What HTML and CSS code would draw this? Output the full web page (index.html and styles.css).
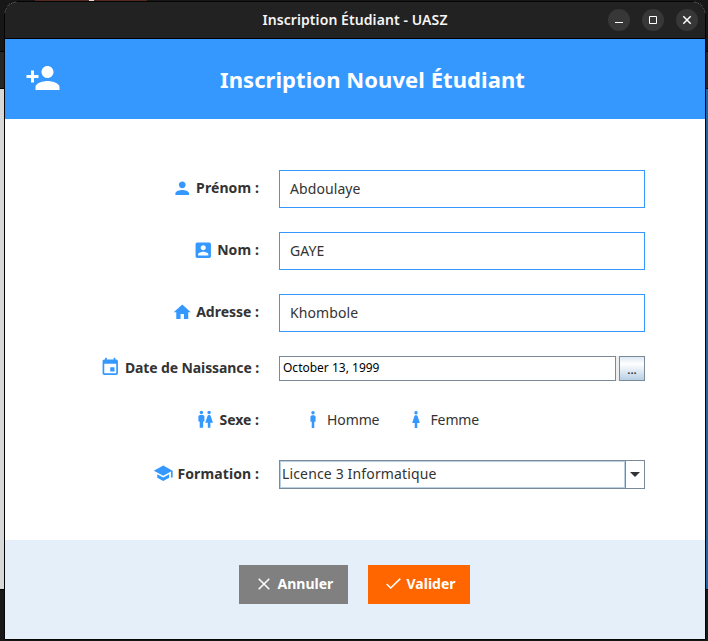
FILE: index.html
```
<!DOCTYPE html>
<html lang="fr">
<head>
<meta charset="utf-8">
<title>Inscription Étudiant - UASZ</title>
<link rel="stylesheet" href="styles.css">
</head>
<body>
<main class="window">
  <div class="titlebar">
    <div class="window-title">Inscription Étudiant - UASZ</div>
    <div class="controls">
      <span class="control"><svg viewBox="0 0 22 22"><path d="M7 13.5h8" /></svg></span>
      <span class="control"><svg viewBox="0 0 22 22"><path d="M7.5 7.5h7v7h-7z" /></svg></span>
      <span class="control"><svg viewBox="0 0 22 22"><path d="M7.3 7.3l7.4 7.4M14.7 7.3l-7.4 7.4" stroke-width="1.5" /></svg></span>
    </div>
  </div>
  <header class="header">
    <svg class="header-icon" viewBox="0 0 24 24"><path d="M15 12c2.21 0 4-1.79 4-4s-1.79-4-4-4-4 1.79-4 4 1.79 4 4 4zm-9-2V7H4v3H1v2h3v3h2v-3h3v-2H6zm9 4c-2.67 0-8 1.34-8 4v2h16v-2c0-2.66-5.33-4-8-4z"/></svg>
    <h1>Inscription Nouvel Étudiant</h1>
  </header>
  <form class="form">
    <div class="label label-loose"><svg class="icon" viewBox="0 0 24 24"><path d="M12 12c2.21 0 4-1.79 4-4s-1.79-4-4-4-4 1.79-4 4 1.79 4 4 4zm0 2c-2.67 0-8 1.34-8 4v2h16v-2c0-2.66-5.33-4-8-4z"/></svg><span>Prénom :</span></div>
    <div class="field">Abdoulaye</div>

    <div class="label label-loose"><svg class="icon" viewBox="0 0 24 24"><path d="M3 5v14c0 1.1.89 2 2 2h14c1.1 0 2-.9 2-2V5c0-1.1-.9-2-2-2H5c-1.11 0-2 .9-2 2zm12 4c0 1.66-1.34 3-3 3s-3-1.34-3-3 1.34-3 3-3 3 1.34 3 3zm-9 8c0-2 4-3.1 6-3.1s6 1.1 6 3.1v1H6v-1z"/></svg><span>Nom :</span></div>
    <div class="field">GAYE</div>

    <div class="label"><svg class="icon" viewBox="0 0 24 24"><path d="M10 20v-6h4v6h5v-8h3L12 3 2 12h3v8z"/></svg><span>Adresse :</span></div>
    <div class="field">Khombole</div>

    <div class="label label-tight"><svg class="icon" viewBox="0 0 24 24"><path d="M17 12h-5v5h5v-5zM16 1v2H8V1H6v2H5c-1.11 0-1.99.9-1.99 2L3 19c0 1.1.89 2 2 2h14c1.1 0 2-.9 2-2V5c0-1.1-.9-2-2-2h-1V1h-2zm3 18H5V8h14v11z"/></svg><span>Date de Naissance :</span></div>
    <div class="date">
      <div class="date-value">October 13, 1999</div>
      <div class="date-button">...</div>
    </div>

    <div class="label"><svg class="icon" viewBox="0 0 24 24"><path d="M5.500 22v-7.500H4V9c0-1.100.9-2 2-2h3c1.100 0 2 .9 2 2v5.500H9.500V22h-4zM18 22v-6h3l-2.540-7.630C18.180 7.550 17.420 7 16.560 7h-.12c-.86 0-1.630.55-1.900 1.370L12 16h3v6h3zM7.500 6c1.110 0 2-.89 2-2s-.89-2-2-2-2 .89-2 2 .89 2 2 2zm9 0c1.110 0 2-.89 2-2s-.89-2-2-2-2 .89-2 2 .89 2 2 2z"/></svg><span>Sexe :</span></div>
    <div class="options">
      <div class="option"><svg class="person" viewBox="0 0 8 20"><path d="M2.500 20v-7.500H1V7c0-1.100.9-2 2-2h2c1.100 0 2 .9 2 2v5.500H5.500V20z"/><circle cx="4" cy="2" r="2"/></svg><span>Homme</span></div>
      <div class="option"><svg class="person" viewBox="0 0 9 20"><path d="M6 20v-6h3L6.500 6.370C6.200 5.550 5.500 5 4.560 5h-.12C3.500 5 2.800 5.550 2.500 6.370L0 14h3v6z"/><circle cx="4.500" cy="2" r="2"/></svg><span>Femme</span></div>
    </div>

    <div class="label label-loose"><svg class="icon" viewBox="0 0 24 24"><path d="M5 13.180v4L12 21l7-3.820v-4L12 17l-7-3.820zM12 3L1 9l11 6 9-4.910V17h2V9L12 3z"/></svg><span>Formation :</span></div>
    <div class="select">
      <div class="select-value">Licence 3 Informatique</div>
      <div class="select-arrow"><svg viewBox="0 0 10 5"><path d="M0 0h10L5 5z"/></svg></div>
    </div>
  </form>
  <footer class="footer">
    <div class="button cancel"><svg viewBox="0 0 12 12"><path d="M.7.7l10.600 10.600M11.300.7L.7 11.300"/></svg><span>Annuler</span></div>
    <div class="button submit"><svg class="check" viewBox="0 0 15 11"><path d="M.7 6l4 4L14.300.6"/></svg><span>Valider</span></div>
  </footer>
</main>
</body>
</html>
```
FILE: styles.css
```
* { box-sizing: border-box; }

body {
  margin: 0;
  height: 641px;
  overflow: hidden;
  padding: 1px 2px 1px 4px;
  font: 14px/20px "Noto Sans", sans-serif;
  color: #333;
  /* Desktop visible around the window */
  background:
    linear-gradient(#ddd, #ddd) 89px 0 / 5px 1px no-repeat,
    linear-gradient(#552a20, #552a20) 35px 0 / 112px 1px no-repeat,
    linear-gradient(#171717 0 51px, #000 51px 52px, #262626 52px 88px, #000 88px 89px, #d6d8da 89px 589px, #000 589px 590px, #181818 590px) 0 0 / 4px 641px no-repeat,
    linear-gradient(#171717 0 51px, #000 51px 52px, #262626 52px 88px, #000 88px 89px, #1b669c 89px 589px, #000 589px 590px, #141a18 590px) 100% 0 / 3px 641px no-repeat,
    #171717;
}

.window {
  width: 702px;
  height: 639px;
  border: 1px solid #050505;
  border-radius: 13px 13px 0 0;
  overflow: hidden;
  background: #fff;
}

.titlebar {
  display: grid;
  grid-template-columns: 1fr;
  align-items: center;
  height: 37px;
  background: #222;
  border-bottom: 1px solid #000;
}

.window-title, .controls { grid-area: 1 / 1; }

.window-title {
  text-align: center;
  font-size: 14px;
  font-weight: 600;
  letter-spacing: 0.08px;
  color: #f5f5f5;
}

.controls {
  display: flex;
  justify-content: flex-end;
  gap: 12px;
  padding-right: 7px;
}

.control {
  width: 22px;
  height: 22px;
  border-radius: 50%;
  background: #373737;
}

.control svg { display: block; fill: none; stroke: #fff; }

.header {
  display: flex;
  align-items: center;
  height: 80px;
  padding: 0 20px;
  background: #3498ff;
  color: #fff;
}

.header-icon { width: 36px; height: 36px; margin-top: -3px; fill: #fff; }

h1 {
  flex: 1;
  margin: 0;
  padding-right: 1px;
  text-align: center;
  font-size: 22px;
  line-height: 30px;
  letter-spacing: 0.07px;
}

.form {
  display: grid;
  grid-template-columns: 254px 366px;
  grid-template-rows: 38px 38px 38px 25px 31px 29px;
  gap: 24px 20px;
  height: 421px;
  padding-top: 51px;
}

.label {
  display: flex;
  align-items: center;
  justify-content: flex-end;
  gap: 4px;
  padding-bottom: 2px;
  font-weight: 700;
  white-space: nowrap;
}

.label-loose { letter-spacing: 0.1px; }
.label-tight { letter-spacing: -0.11px; }

.icon { width: 20.500px; height: 20.500px; flex: none; fill: #3498ff; }

.field {
  display: flex;
  align-items: center;
  padding-left: 10px;
  border: 1px solid #3498ff;
  letter-spacing: 0.08px;
}

.date { display: flex; gap: 3px; }

.date-value {
  width: 337px;
  padding-left: 3px;
  border: 1px solid #7a8a99;
  box-shadow: 3px 0 #eee;
  font-size: 12px;
  line-height: 22px;
  color: #000;
}

.date-button {
  width: 26px;
  border: 1px solid #7a8a99;
  background: linear-gradient(#dde8f3, #fff 30%, #b8cfe5);
  text-align: center;
  font-size: 11.500px;
  font-weight: 600;
  line-height: 25px;
}

.options { display: flex; align-items: center; padding: 0 0 2px 30px; gap: 33px; }
.option { display: flex; align-items: center; gap: 10px; letter-spacing: -0.1px; }
.person { width: 8px; height: 17px; fill: #3498ff; }

.select { display: flex; border: 1px solid #7a8a99; }

.select-value {
  width: 345px;
  padding-left: 1px;
  border: 1px solid #b8cfe5;
  line-height: 23px;
  letter-spacing: 0.15px;
}

.select-arrow {
  flex: 1;
  display: flex;
  align-items: center;
  justify-content: center;
  border-left: 1px solid #7a8a99;
}

.select-arrow svg { width: 10px; height: 5px; fill: #333; }

.footer {
  display: flex;
  justify-content: center;
  gap: 20px;
  height: 99px;
  padding: 25px 2px 0 0;
  background: #e5effa;
}

.button {
  display: flex;
  align-items: center;
  gap: 8px;
  height: 39px;
  color: #fff;
  font-weight: 700;
}

.button span { padding-bottom: 1px; }
.button svg { width: 12px; height: 12px; margin-bottom: 2px; fill: none; stroke: #fff; stroke-width: 1.500; }
.cancel { width: 109px; padding-left: 19px; background: #808080; }
.submit { width: 102px; padding-left: 18px; gap: 6px; background: #ff6600; }
.button .check { width: 15px; height: 11px; }
```
